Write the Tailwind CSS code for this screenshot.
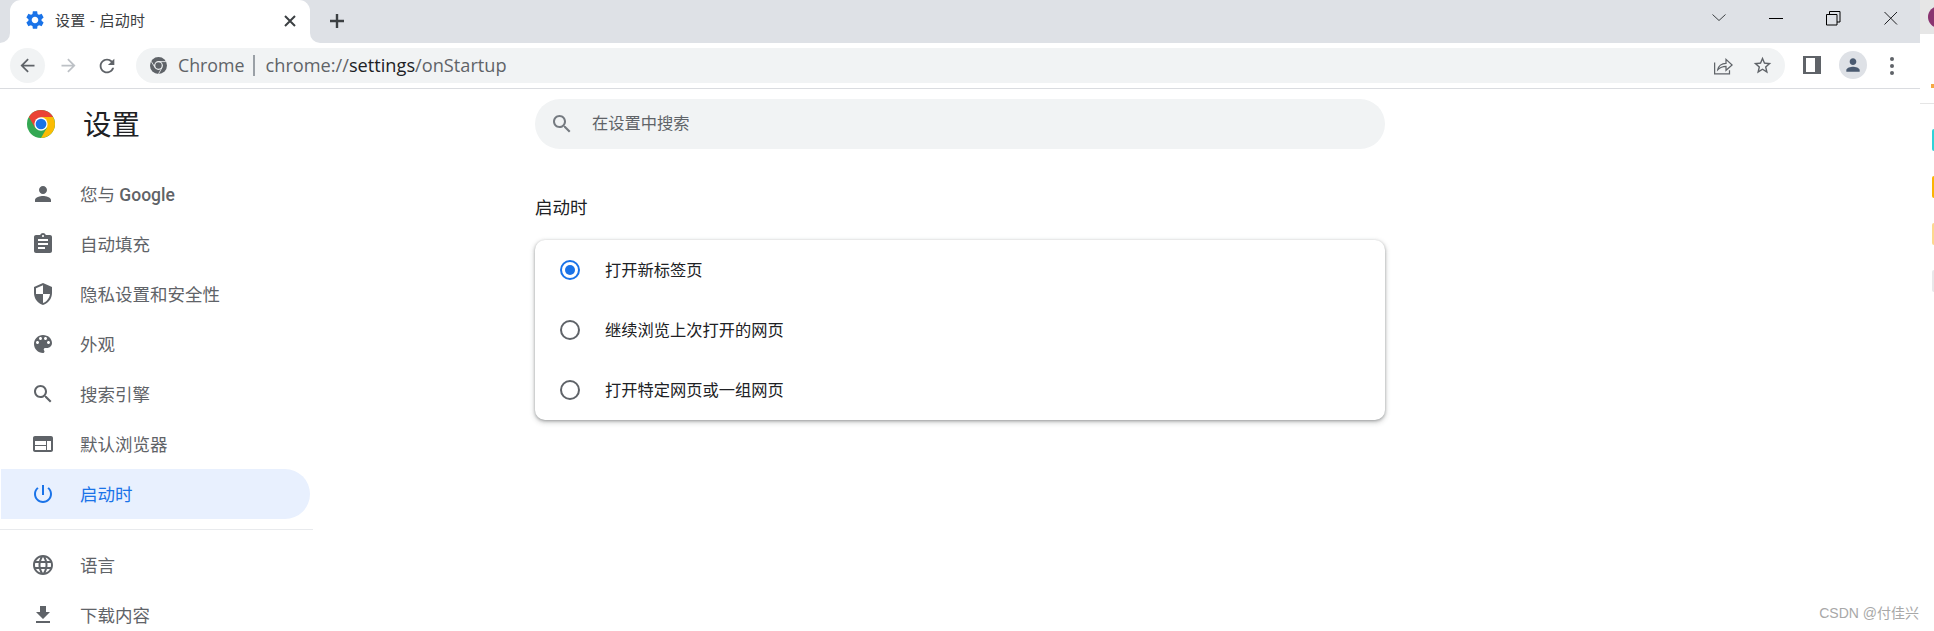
<!DOCTYPE html>
<html lang="zh-CN">
<head>
    <meta charset="UTF-8">
    <title>设置 - 启动时</title>
    <script src="https://cdn.jsdelivr.net/npm/@tailwindcss/browser@4"></script>
</head>
<body class="h-[631px] w-[1934px] overflow-hidden bg-white font-['Roboto','Noto_Sans_CJK_SC',sans-serif]">
<div class="flex h-[631px]">
    <div class="relative flex w-[1920px] flex-col">
        <!-- tab strip -->
        <div class="flex h-[43px] items-start bg-[#dee1e6] pl-[10px]">
            <div class="relative flex h-[43px] w-[300px] items-center rounded-t-[11px] bg-white pb-[3px] pl-[14px]">
                <span class="absolute bottom-0 left-[-10px] size-[10px] bg-white"><span class="block size-[10px] rounded-br-[10px] bg-[#dee1e6]"></span></span>
                <span class="absolute bottom-0 right-[-10px] size-[10px] bg-white"><span class="block size-[10px] rounded-bl-[10px] bg-[#dee1e6]"></span></span>
                <svg class="size-[22px] fill-[#1a73e8]" viewBox="0 0 24 24"><path d="M19.14 12.94c.04-.3.06-.61.06-.94 0-.32-.02-.64-.07-.94l2.03-1.58c.18-.14.23-.41.12-.61l-1.92-3.32c-.12-.22-.37-.29-.59-.22l-2.39.96c-.5-.38-1.03-.7-1.62-.94l-.36-2.54c-.04-.24-.24-.41-.48-.41h-3.84c-.24 0-.43.17-.47.41l-.36 2.54c-.59.24-1.13.57-1.62.94l-2.39-.96c-.22-.08-.47 0-.59.22L2.74 8.87c-.12.21-.08.47.12.61l2.03 1.58c-.05.3-.09.63-.09.94s.02.64.07.94l-2.03 1.58c-.18.14-.23.41-.12.61l1.92 3.32c.12.22.37.29.59.22l2.39-.96c.5.38 1.03.7 1.62.94l.36 2.54c.05.24.24.41.48.41h3.84c.24 0 .44-.17.47-.41l.36-2.54c.59-.24 1.13-.56 1.62-.94l2.39.96c.22.08.47 0 .59-.22l1.92-3.32c.12-.22.07-.47-.12-.61l-2.01-1.58zM12 15.6c-1.98 0-3.6-1.62-3.6-3.6s1.62-3.6 3.6-3.6 3.6 1.62 3.6 3.6-1.62 3.6-3.6 3.6z"/></svg>
                <span class="ml-[9px] pt-[2px] text-[15px] tracking-[0.2px] text-[#3c4043] [word-spacing:1px]">设置 - 启动时</span>
                <svg class="absolute left-[271px] top-[12px] size-[18px] stroke-[#3c4043] stroke-[2]" viewBox="0 0 18 18"><path d="M4 4l10 10M14 4L4 14"/></svg>
            </div>
            <svg class="ml-[17px] mt-[11px] size-[20px] stroke-[#3c4043] stroke-[2.4]" viewBox="0 0 20 20"><path d="M10 3v14M3 10h14"/></svg>
            <div class="ml-auto mt-[7px] flex items-center">
                <svg class="size-[22px] fill-none stroke-[#3c4043] stroke-[1]" viewBox="0 0 22 22"><path d="M4.5 7.5L11 13.5l6.5-6"/></svg>
                <svg class="ml-[35px] size-[22px] stroke-black stroke-[1]" viewBox="0 0 22 22"><path d="M4 11.5h14"/></svg>
                <svg class="ml-[35px] size-[22px] fill-none stroke-black stroke-[1]" viewBox="0 0 22 22"><path d="M4.5 7.5h10.500v10.500h-10.500zM7.500 7.500v-3h10.500v10.500h-3"/></svg>
                <svg class="ml-[36px] mr-[18px] size-[22px] stroke-[#202124] stroke-[1]" viewBox="0 0 22 22"><path d="M4.500 5l12.500 12.500M17 5L4.500 17.500"/></svg>
            </div>
        </div>
        <!-- toolbar -->
        <div class="flex h-[46px] shrink-0 items-start border-b border-[#dadce0] bg-white pl-[10px] pt-[5px]">
            <div class="flex h-[35px] w-[35px] items-center justify-center rounded-full bg-[#f1f3f4]">
                <svg class="size-[21px] fill-[#5f6368]" viewBox="0 0 24 24"><path d="M20 11H7.830l5.590-5.590L12 4l-8 8 8 8 1.410-1.410L7.830 13H20v-2z"/></svg>
            </div>
            <div class="ml-[7px] flex h-[35px] w-[33px] items-center justify-center">
                <svg class="size-[21px] fill-[#bdc1c6]" viewBox="0 0 24 24"><path d="M12 4l-1.410 1.410L16.170 11H4v2h12.170l-5.580 5.590L12 20l8-8z"/></svg>
            </div>
            <div class="ml-[5px] flex h-[35px] w-[33px] items-center justify-center">
                <svg class="size-[22px] fill-[#5f6368]" viewBox="0 0 24 24"><path d="M17.650 6.350C16.200 4.900 14.210 4 12 4c-4.420 0-7.990 3.580-7.990 8s3.570 8 7.990 8c3.730 0 6.840-2.550 7.730-6h-2.080c-.82 2.330-3.040 4-5.650 4-3.310 0-6-2.690-6-6s2.690-6 6-6c1.660 0 3.140.69 4.220 1.780L13 11h7V4l-2.350 2.350z"/></svg>
            </div>
            <!-- address bar -->
            <div class="ml-[13px] flex h-[35px] w-[1649px] items-center rounded-full bg-[#f1f3f4] pl-[14px] font-['Open_Sans','Noto_Sans_CJK_SC',sans-serif] text-[17.800px] text-[#5f6368]">
                <svg class="size-[17px]" viewBox="0 0 24 24">
                    <circle cx="12" cy="12" r="12" fill="#5f6368"/>
                    <circle cx="12" cy="12" r="6.200" fill="#f1f3f4"/>
                    <circle cx="12" cy="12" r="4.500" fill="#5f6368"/>
                    <path fill="none" stroke="#f1f3f4" stroke-width="1.200" d="M12 6.500H22.400M7.200 15L1.600 6M16.800 15L12 24"/>
                </svg>
                <span class="ml-[11px] leading-none">Chrome</span>
                <span class="ml-[8px] h-[21px] w-[2px] bg-[#9aa0a6]"></span>
                <span class="ml-[11px] text-[18.200px] leading-none">chrome://<span class="text-[#202124]">settings</span>/onStartup</span>
                <svg class="ml-auto size-[21px] fill-none stroke-[#5f6368] stroke-[1.400]" viewBox="0 0 24 24"><path d="M3 8.500v13h17v-4M6.500 17c.5-4.500 4.500-7.500 9.500-7.500V5l7 6.500-7 6v-4.500c-4 0-7 1.500-9.500 4z"/></svg>
                <svg class="ml-[19px] mr-[12px] size-[21px] fill-[#5f6368]" viewBox="0 0 24 24"><path d="M22 9.240l-7.190-.62L12 2 9.190 8.630 2 9.240l5.460 4.730L5.820 21 12 17.270 18.180 21l-1.630-7.030L22 9.240zM12 15.400l-3.760 2.270 1-4.280-3.320-2.880 4.380-.38L12 6.100l1.710 4.040 4.380.38-3.320 2.880 1 4.280L12 15.400z"/></svg>
            </div>
            <!-- right of the address bar -->
            <div class="ml-[18px] mt-[8px] size-[18px] border-y-2 border-l-[3px] border-r-[6px] border-[#5f6368] bg-white"></div>
            <div class="ml-[18px] mt-[3px] flex size-[28px] items-center justify-center rounded-full bg-[#dee1e6]">
                <svg class="size-[20px] fill-[#4a5a70]" viewBox="0 0 24 24"><path d="M12 12c2.210 0 4-1.790 4-4s-1.790-4-4-4-4 1.790-4 4 1.790 4 4 4zm0 2c-2.670 0-8 1.340-8 4v2h16v-2c0-2.660-5.330-4-8-4z"/></svg>
            </div>
            <div class="ml-[23px] mt-[9px] flex flex-col gap-[3px]">
                <span class="size-[4px] rounded-full bg-[#5f6368]"></span>
                <span class="size-[4px] rounded-full bg-[#5f6368]"></span>
                <span class="size-[4px] rounded-full bg-[#5f6368]"></span>
            </div>
        </div>
        <!-- page -->
        <div class="flex min-h-0 flex-1 overflow-hidden">
            <aside class="w-[314px] shrink-0">
                <div class="flex h-[70px] items-center pl-[27px]">
                    <svg class="size-[28px]" viewBox="0 0 24 24">
                        <circle cx="12" cy="12" r="12" fill="#34a853"/>
                        <path fill="#ea4335" d="M12 0A12 12 0 0 1 22.390 6H12L6.800 15 1.610 6A12 12 0 0 1 12 0z"/>
                        <path fill="#fbbc04" d="M22.390 6A12 12 0 0 1 12 24l5.200-9L12 6z"/>
                        <circle cx="12" cy="12" r="5.700" fill="#fff"/>
                        <circle cx="12" cy="12" r="4.600" fill="#1a73e8"/>
                    </svg>
                    <span class="ml-[28px] pt-[4px] text-[28.500px] text-[#202124]">设置</span>
                </div>
                <nav class="pt-[10px] text-[17.500px] text-[#5f6368]">
                    <a class="flex h-[50px] items-center pl-[31px]"><svg class="size-[24px] fill-[#5f6368]" viewBox="0 0 24 24"><path d="M12 12c2.210 0 4-1.790 4-4s-1.790-4-4-4-4 1.790-4 4 1.790 4 4 4zm0 2c-2.670 0-8 1.340-8 4v2h16v-2c0-2.660-5.330-4-8-4z"/></svg><span class="ml-[25px] pt-[2px]">您与 <span class="font-medium">Google</span></span></a>
                    <a class="flex h-[50px] items-center pl-[31px]"><svg class="size-[24px] fill-[#5f6368]" viewBox="0 0 24 24"><path d="M19 3h-4.180C14.400 1.840 13.300 1 12 1c-1.300 0-2.400.84-2.820 2H5c-1.100 0-2 .9-2 2v14c0 1.100.9 2 2 2h14c1.100 0 2-.9 2-2V5c0-1.100-.9-2-2-2zm-7 0c.55 0 1 .45 1 1s-.45 1-1 1-1-.45-1-1 .45-1 1-1zm2 14H7v-2h7v2zm3-4H7v-2h10v2zm0-4H7V7h10v2z"/></svg><span class="ml-[25px] pt-[2px]">自动填充</span></a>
                    <a class="flex h-[50px] items-center pl-[31px]"><svg class="size-[24px] fill-[#5f6368]" viewBox="0 0 24 24"><path d="M12 1L3 5v6c0 5.550 3.840 10.740 9 12 5.160-1.260 9-6.450 9-12V5l-9-4zm0 10.990h7c-.53 4.120-3.280 7.790-7 8.940V12H5V6.300l7-3.110v8.800z"/></svg><span class="ml-[25px] pt-[2px]">隐私设置和安全性</span></a>
                    <a class="flex h-[50px] items-center pl-[31px]"><svg class="size-[24px] fill-[#5f6368]" viewBox="0 0 24 24"><path d="M12 3c-4.970 0-9 4.030-9 9s4.030 9 9 9c.83 0 1.500-.67 1.500-1.500 0-.39-.15-.74-.39-1.010-.23-.26-.38-.61-.38-.99 0-.83.67-1.500 1.500-1.500H16c2.760 0 5-2.240 5-5 0-4.420-4.030-8-9-8zm-5.500 9c-.83 0-1.500-.67-1.500-1.500S5.670 9 6.500 9 8 9.670 8 10.500 7.330 12 6.500 12zm3-4C8.670 8 8 7.330 8 6.500S8.670 5 9.500 5s1.500.67 1.500 1.500S10.330 8 9.500 8zm5 0c-.83 0-1.500-.67-1.500-1.500S13.670 5 14.500 5s1.500.67 1.500 1.500S15.330 8 14.500 8zm3 4c-.83 0-1.500-.67-1.500-1.500S16.670 9 17.500 9s1.500.67 1.500 1.500-.67 1.500-1.500 1.500z"/></svg><span class="ml-[25px] pt-[2px]">外观</span></a>
                    <a class="flex h-[50px] items-center pl-[31px]"><svg class="size-[24px] fill-[#5f6368]" viewBox="0 0 24 24"><path d="M15.500 14h-.79l-.28-.27C15.410 12.590 16 11.110 16 9.500 16 5.910 13.090 3 9.500 3S3 5.910 3 9.500 5.910 16 9.500 16c1.610 0 3.090-.59 4.230-1.570l.27.28v.79l5 4.990L20.490 19l-4.990-5zm-6 0C7.010 14 5 11.990 5 9.500S7.010 5 9.500 5 14 7.010 14 9.500 11.990 14 9.500 14z"/></svg><span class="ml-[25px] pt-[2px]">搜索引擎</span></a>
                    <a class="flex h-[50px] items-center pl-[31px]"><svg class="size-[24px] fill-[#5f6368]" viewBox="0 0 24 24"><path d="M20 4H4c-1.100 0-1.990.9-1.990 2L2 18c0 1.100.9 2 2 2h16c1.100 0 2-.9 2-2V6c0-1.100-.9-2-2-2zm-5 14H4v-4h11v4zm0-5H4V9h11v4zm5 5h-4V9h4v9z"/></svg><span class="ml-[25px] pt-[2px]">默认浏览器</span></a>
                    <a class="ml-[1px] flex h-[50px] w-[309px] items-center rounded-r-full bg-[#e8f0fe] pl-[30px] text-[#1a73e8]"><svg class="size-[24px] fill-[#1a73e8]" viewBox="0 0 24 24"><path d="M13 3h-2v10h2V3zm4.830 2.170l-1.420 1.420C17.990 7.860 19 9.810 19 12c0 3.870-3.130 7-7 7s-7-3.130-7-7c0-2.190 1.010-4.140 2.580-5.420L6.170 5.170C4.230 6.820 3 9.260 3 12c0 4.970 4.030 9 9 9s9-4.030 9-9c0-2.740-1.230-5.180-3.170-6.830z"/></svg><span class="ml-[25px] pt-[2px]">启动时</span></a>
                    <div class="my-[10px] h-px w-[313px] bg-[#e8eaed]"></div>
                    <a class="flex h-[50px] items-center pl-[31px]"><svg class="size-[24px] fill-[#5f6368]" viewBox="0 0 24 24"><path d="M11.990 2C6.470 2 2 6.480 2 12s4.470 10 9.990 10C17.520 22 22 17.520 22 12S17.520 2 11.990 2zm6.930 6h-2.950c-.32-1.250-.78-2.450-1.380-3.560 1.840.63 3.370 1.910 4.330 3.560zM12 4.040c.83 1.200 1.480 2.530 1.910 3.960h-3.820c.43-1.430 1.080-2.760 1.910-3.960zM4.260 14C4.100 13.360 4 12.690 4 12s.1-1.360.26-2h3.380c-.08.66-.14 1.320-.14 2 0 .68.06 1.340.14 2H4.260zm.82 2h2.950c.32 1.250.78 2.450 1.380 3.560-1.840-.63-3.370-1.900-4.330-3.560zm2.950-8H5.080c.96-1.660 2.490-2.930 4.330-3.560C8.810 5.550 8.350 6.750 8.030 8zM12 19.960c-.83-1.200-1.480-2.530-1.910-3.960h3.820c-.43 1.430-1.080 2.760-1.910 3.960zM14.340 14H9.660c-.09-.66-.16-1.320-.16-2 0-.68.07-1.350.16-2h4.680c.09.65.16 1.320.16 2 0 .68-.07 1.340-.16 2zm.25 5.560c.6-1.110 1.060-2.310 1.380-3.560h2.950c-.96 1.650-2.490 2.930-4.330 3.560zM16.360 14c.08-.66.14-1.320.14-2 0-.68-.06-1.340-.14-2h3.380c.16.64.26 1.310.26 2s-.1 1.360-.26 2h-3.380z"/></svg><span class="ml-[25px] pt-[2px]">语言</span></a>
                    <a class="flex h-[50px] items-center pl-[31px]"><svg class="size-[24px] fill-[#5f6368]" viewBox="0 0 24 24"><path d="M19 9h-4V3H9v6H5l7 7 7-7zM5 18v2h14v-2H5z"/></svg><span class="ml-[25px] pt-[2px]">下载内容</span></a>
                </nav>
            </aside>
            <main class="pl-[221px] pt-[10px]">
                <div class="flex h-[50px] w-[850px] items-center rounded-full bg-[#f1f3f4] pl-[15px] text-[16.250px] text-[#5f6368]">
                    <svg class="size-[24px] fill-[#757a80]" viewBox="0 0 24 24"><path d="M15.500 14h-.79l-.28-.27C15.410 12.590 16 11.110 16 9.500 16 5.910 13.090 3 9.500 3S3 5.910 3 9.500 5.910 16 9.500 16c1.610 0 3.090-.59 4.230-1.570l.27.28v.79l5 4.990L20.490 19l-4.990-5zm-6 0C7.010 14 5 11.990 5 9.500S7.010 5 9.500 5 14 7.010 14 9.500 11.990 14 9.500 14z"/></svg>
                    <span class="ml-[18px]">在设置中搜索</span>
                </div>
                <h2 class="h-[91px] pt-[47px] text-[17.500px] leading-[24px] text-[#202124]">启动时</h2>
                <div class="w-[850px] rounded-[10px] bg-white text-[16.250px] text-[#202124] shadow-[0_1px_3px_rgba(60,64,67,0.4),0_2px_5px_1px_rgba(60,64,67,0.2)]">
                    <label class="flex h-[60px] items-center pl-[25px]">
                        <span class="flex size-[20px] items-center justify-center rounded-full border-2 border-[#1a73e8]"><span class="size-[10px] rounded-full bg-[#1a73e8]"></span></span>
                        <span class="ml-[25px] pt-[2px]">打开新标签页</span>
                    </label>
                    <label class="flex h-[60px] items-center pl-[25px]">
                        <span class="size-[20px] rounded-full border-2 border-[#5f6368]"></span>
                        <span class="ml-[25px] pt-[2px]">继续浏览上次打开的网页</span>
                    </label>
                    <label class="flex h-[60px] items-center pl-[25px]">
                        <span class="size-[20px] rounded-full border-2 border-[#5f6368]"></span>
                        <span class="ml-[25px] pt-[2px]">打开特定网页或一组网页</span>
                    </label>
                </div>
            </main>
        </div>
        <span class="absolute bottom-[7px] right-[1px] font-['Liberation_Sans','Noto_Sans_CJK_SC',sans-serif] text-[14px] text-[#a8a8a8]">CSDN @付佳兴</span>
    </div>
    <!-- sliver of the window behind -->
    <div class="relative w-[14px] shrink-0 bg-white">
        <div class="h-[34px] bg-[#e6e6e6]"></div>
        <span class="absolute left-[8px] top-[6px] size-[22px] rounded-full bg-[#8a3470]"></span>
        <span class="absolute left-[11px] top-[84px] h-[4px] w-[3px] bg-[#f5a742]"></span>
        <div class="absolute left-0 top-[103px] h-px w-[14px] bg-[#e5e5e5]"></div>
        <span class="absolute left-[12px] top-[129px] h-[22px] w-[2px] rounded-l-sm bg-[#2fd3d8]"></span>
        <span class="absolute left-[12px] top-[176px] h-[22px] w-[2px] rounded-l-sm bg-[#fbb404]"></span>
        <span class="absolute left-[12px] top-[223px] h-[22px] w-[2px] rounded-l-sm bg-[#fdd88e]"></span>
        <span class="absolute left-[12px] top-[270px] h-[22px] w-[2px] rounded-l-sm bg-[#e8e8ea]"></span>
    </div>
</div>
</body>
</html>
